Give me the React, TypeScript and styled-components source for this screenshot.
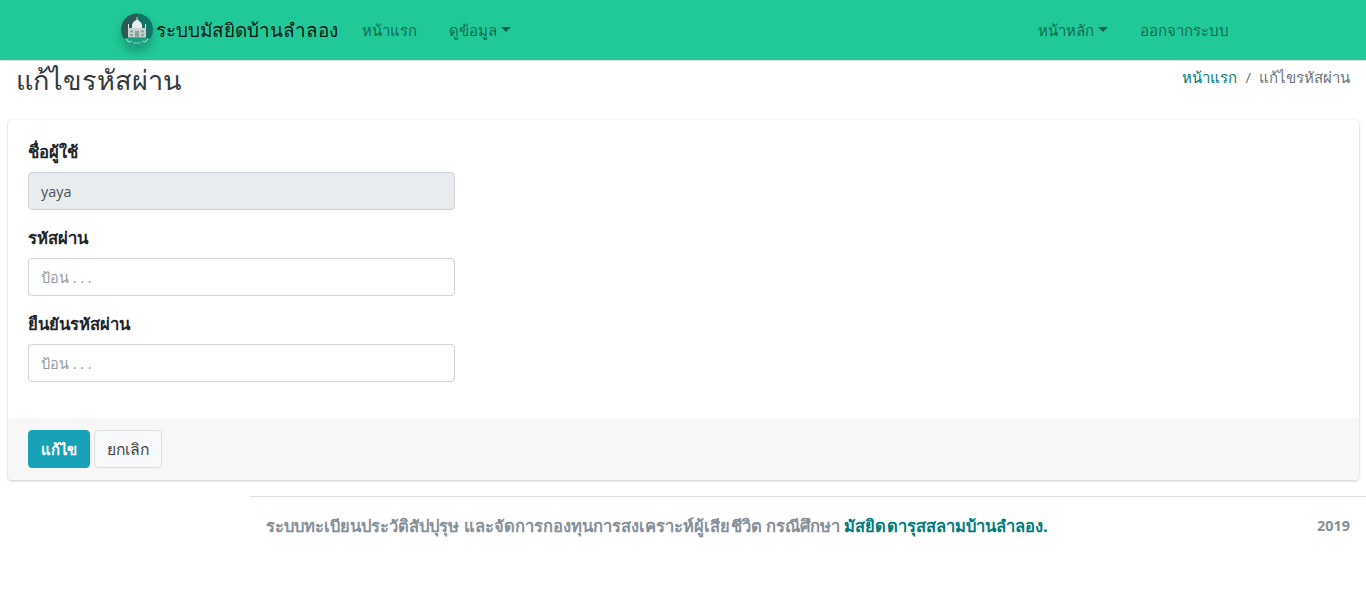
import React from 'react'
import styled, { createGlobalStyle } from 'styled-components'

const GlobalStyle = createGlobalStyle`
  html, body { margin: 0; padding: 0; background: #fff; }
  body {
    font-family: "Open Sans", "Noto Sans", "Liberation Sans", sans-serif;
    font-size: 16px;
    line-height: 24px;
    color: #212529;
  }
  * { box-sizing: border-box; }
`

const Navbar = styled.nav`
  height: 61px;
  background: #20c997;
  border-bottom: 1px solid #dee2e6;
  display: flex;
  align-items: center;
  justify-content: space-between;
  padding: 0 121px 1px;
  font-size: 15px;
`

const NavGroup = styled.div`
  display: flex;
  align-items: center;
`

const Brand = styled.a`
  display: flex;
  align-items: center;
  gap: 3px;
  font-size: 18.9px;
  color: rgba(0, 0, 0, 0.9);
  margin-right: 8px;
`

const LogoWrap = styled.span`
  display: flex;
  width: 32px;
  height: 33px;
  border-radius: 50%;
  box-shadow: 0 6px 10px rgba(0, 0, 0, 0.22);
`

const NavLink = styled.a<{ $caret?: boolean }>`
  display: flex;
  align-items: center;
  padding: 0 16px;
  color: rgba(0, 0, 0, 0.5);
  &::after {
    content: ${({ $caret }) => ($caret ? '""' : 'none')};
    margin-left: 4px;
    border-top: 5px solid;
    border-left: 5px solid transparent;
    border-right: 5px solid transparent;
  }
`

const HeaderRow = styled.header`
  display: flex;
  justify-content: space-between;
  padding: 0 16px;
  height: 59px;
`

const PageTitle = styled.h1`
  margin: 0;
  font-size: 27.1px;
  font-weight: 400;
  line-height: 38px;
  color: #343a40;
`

const Crumbs = styled.ol`
  display: flex;
  list-style: none;
  margin: 4px 0 0;
  padding: 0;
  font-size: 15px;
  color: #6c757d;
`

const CrumbLink = styled.a`
  color: #007b7b;
`

const Divider = styled.span`
  padding: 0 8px;
`

const Card = styled.section`
  margin: 0 7px 0 8px;
  height: 360px;
  display: flex;
  flex-direction: column;
  border-radius: 4px;
  background: #fff;
  box-shadow: 0 0 1px rgba(0, 0, 0, 0.125), 0 1px 3px rgba(0, 0, 0, 0.2);
  overflow: hidden;
`

const CardBody = styled.form`
  flex: 1;
  padding: 20px 20px 0;
`

const Field = styled.div`
  width: 427px;
  margin-bottom: 16px;
`

const Label = styled.label`
  display: block;
  font-size: 16.7px;
  font-weight: 700;
  margin-bottom: 8px;
  line-height: 24px;
  height: 24px;
`

const Input = styled.input`
  display: block;
  width: 100%;
  height: 38px;
  padding: 6px 12px;
  font: inherit;
  font-size: 14.4px;
  color: #495057;
  background: #fff;
  border: 1px solid #ced4da;
  border-radius: 4px;
  outline: none;
  &::placeholder { color: #939ba2; opacity: 1; }
  &:disabled { background: #e9ecef; opacity: 1; }
`

const CardFooter = styled.div`
  display: flex;
  gap: 4px;
  height: 62px;
  padding: 12px 20px;
  background: #f7f7f7;
`

const Button = styled.button<{ $primary?: boolean }>`
  height: 38px;
  padding: 0 12px;
  font: inherit;
  font-size: ${({ $primary }) => ($primary ? '14.85px' : '15.7px')};
  font-weight: ${({ $primary }) => ($primary ? 700 : 400)};
  color: ${({ $primary }) => ($primary ? '#fff' : '#444')};
  background: ${({ $primary }) => ($primary ? '#17a2b8' : '#f8f9fa')};
  border: 1px solid ${({ $primary }) => ($primary ? '#17a2b8' : '#ddd')};
  border-radius: 4px;
`

const Footer = styled.footer`
  margin: 16px 0 0 250px;
  border-top: 1px solid #dee2e6;
  padding: 16px;
  height: 76px;
  display: flex;
  justify-content: space-between;
  color: #869099;
  font-weight: 700;
  font-size: 14.4px;
  line-height: 26px;
`

const FooterText = styled.span`
  font-size: 16.55px;
  letter-spacing: 0.025px;
`

const FooterLink = styled.a`
  color: #007b7b;
`

const MosqueLogo = () => (
  <svg width="32" height="33" viewBox="0 0 32 33">
    <defs>
      <clipPath id="disc"><circle cx="16" cy="16.5" r="16" /></clipPath>
    </defs>
    <g clipPath="url(#disc)">
      <rect width="16" height="33" fill="#2c5a55" />
      <rect x="16" width="16" height="33" fill="#0e7568" />
      <rect y="25" width="32" height="8" fill="#1c9c80" />
      {/* building */}
      <path d="M7 15h18v9.500H7z" fill="#c6d3cf" />
      <path d="M11 13c0-3.500 2.500-5 5-6.500 2.500 1.500 5 3 5 6.500v2H11z" fill="#e8efec" />
      <path d="M15.600 4h.8v3h-.8zM7 11h1v4H7zM24 11h1v4h-1z" fill="#e8efec" />
      <path d="M14 18h4v6.500h-4zM9 17.500h3v2H9zM20 17.500h3v2h-3zM9 21h3v2H9zM20 21h3v2h-3z" fill="#87a39c" />
      {/* laurel */}
      <path d="M5 26l3 3 3-1M27 26l-3 3-3-1M12 30h8" stroke="#8ad6b8" strokeWidth="1.200" fill="none" />
    </g>
  </svg>
)

export default function App() {
  return (
    <>
      <GlobalStyle />
      <Navbar>
        <NavGroup>
          <Brand>
            <LogoWrap><MosqueLogo /></LogoWrap>
            ระบบมัสยิดบ้านลำลอง
          </Brand>
          <NavLink>หน้าแรก</NavLink>
          <NavLink $caret>ดูข้อมูล</NavLink>
        </NavGroup>
        <NavGroup>
          <NavLink $caret>หน้าหลัก</NavLink>
          <NavLink>ออกจากระบบ</NavLink>
        </NavGroup>
      </Navbar>
      <HeaderRow>
        <PageTitle>แก้ไขรหัสผ่าน</PageTitle>
        <Crumbs>
          <li><CrumbLink>หน้าแรก</CrumbLink></li>
          <li><Divider>/</Divider>แก้ไขรหัสผ่าน</li>
        </Crumbs>
      </HeaderRow>
      <Card>
        <CardBody>
          <Field>
            <Label>ชื่อผู้ใช้</Label>
            <Input disabled value="yaya" readOnly />
          </Field>
          <Field>
            <Label>รหัสผ่าน</Label>
            <Input placeholder="ป้อน . . ." />
          </Field>
          <Field>
            <Label>ยืนยันรหัสผ่าน</Label>
            <Input placeholder="ป้อน . . ." />
          </Field>
        </CardBody>
        <CardFooter>
          <Button $primary type="button">แก้ไข</Button>
          <Button type="button">ยกเลิก</Button>
        </CardFooter>
      </Card>
      <Footer>
        <FooterText>
          ระบบทะเบียนประวัติสัปปุรุษ และจัดการกองทุนการสงเคราะห์ผู้เสียชีวิต กรณีศึกษา{' '}
          <FooterLink>มัสยิดดารุสสลามบ้านลำลอง.</FooterLink>
        </FooterText>
        <span>2019</span>
      </Footer>
    </>
  )
}
